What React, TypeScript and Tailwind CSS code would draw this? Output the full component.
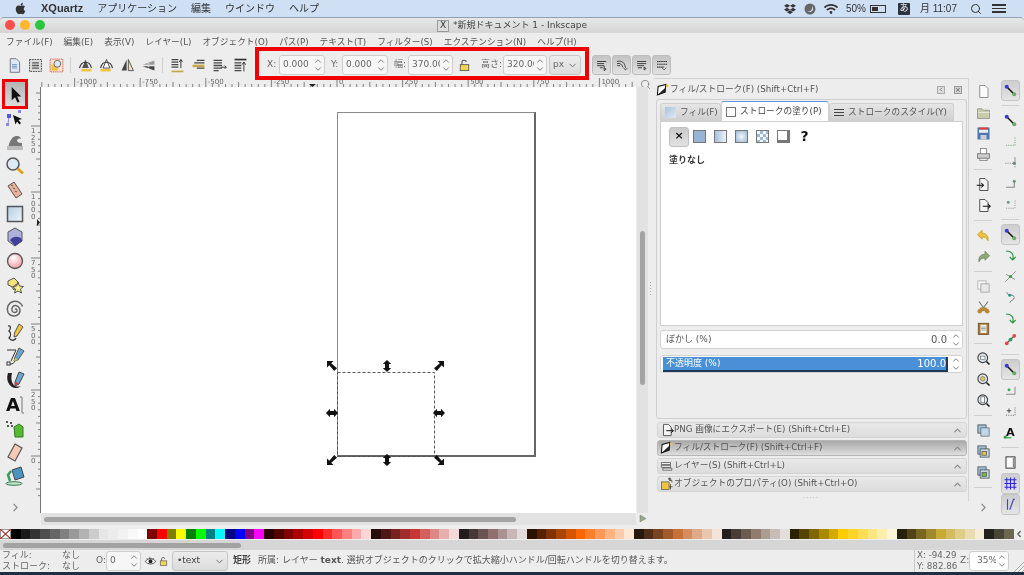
import type { ReactNode } from "react";
import { FaApple, FaDropbox, FaWifi } from "react-icons/fa";
import { ChevronDown, ChevronRight, ChevronUp, ChevronLeft, Search } from "lucide-react";

const Ico = ({ children, s = 20 }: { children: ReactNode; s?: number }) => (
  <svg width={s} height={s} viewBox="0 0 20 20" className="shrink-0">
    {children}
  </svg>
);

const doc = "M5 2h7l4 4v12H5z";

const icons: Record<string, ReactNode> = {
  // left toolbox
  select: <path d="M6 2v14l3.5-3 2.6 5.5 2.2-1-2.6-5.3H16z" fill="#111" />,
  node: (
    <g>
      <path d="M4 8 3 16" stroke="#8888ee" fill="none" />
      <rect x="2" y="6" width="4" height="4" fill="#5555ee" />
      <rect x="1" y="15" width="3" height="3" fill="#8888ee" />
      <rect x="13" y="2" width="3" height="3" fill="#8888ee" />
      <path d="m8 7 9 4-3.5 1 2.5 3-1.500 1.500-2.500-3-1.500 3z" fill="#111" />
    </g>
  ),
  tweak: (
    <g>
      <path d="M3 17c1-6 3-12 8-13 3-.5 5 1 5 3-2-1-4 0-4 2 1 2 4 2 5 2v6z" fill="#777" />
      <path d="M2 14h16v4H2z" fill="#bbb" />
    </g>
  ),
  zoom: (
    <g>
      <circle cx="8" cy="8" r="6" fill="#dceaf6" stroke="#555" strokeWidth="1.500" />
      <path d="m12.500 12.500 5.500 5" stroke="#e0a020" strokeWidth="3" />
    </g>
  ),
  ruler: (
    <g>
      <path d="m3 6 6-4 8 12-6 4z" fill="#eab39a" stroke="#555" />
      <path d="m6 5 2 1M8 8l2 1M10 11l2 1" stroke="#555" />
    </g>
  ),
  rect: (
    <g>
      <defs>
        <linearGradient id="rc" x1="0" y1="0" x2="1" y2="1">
          <stop offset="0" stopColor="#b5cde4" />
          <stop offset="1" stopColor="#f0f4f8" />
        </linearGradient>
      </defs>
      <rect x="2.500" y="2.500" width="15" height="15" fill="url(#rc)" stroke="#555" strokeWidth="1.500" />
    </g>
  ),
  box3d: (
    <g>
      <path d="m10 1 7 4v9l-7 5-7-5V5z" fill="#b0b0dc" stroke="#555" />
      <path d="M5 13c3-4 7-4 11-2l1 3-7 5z" fill="#40409c" />
    </g>
  ),
  circle: (
    <g>
      <defs>
        <radialGradient id="cc" cx="0.4" cy="0.3" r="0.8">
          <stop offset="0" stopColor="#fff" />
          <stop offset="1" stopColor="#f38f9b" />
        </radialGradient>
      </defs>
      <circle cx="10" cy="10" r="7.500" fill="url(#cc)" stroke="#555" strokeWidth="1.300" />
    </g>
  ),
  star: (
    <g>
      <path d="m3 6 6-3 5 5-4 2-1 5-3-4-3-1z" fill="#f4e37a" stroke="#555" />
      <path d="m13 7 1.500 4 4 .5-3 2.500 1 4-3.500-2-3.500 2 1-4-3-2.500 4-.5z" fill="#f8ec88" stroke="#555" />
    </g>
  ),
  spiral: (
    <path
      d="M10 10.500c1-1 2.500 0 2 1.500-.8 2-4 1.800-5-.3-1-3 1.500-5.700 4.500-5 3.500 1 4.500 5.300 2.500 8-3 3.500-9 3-11-1.200C1 9 3.500 3.500 8.500 2.500c4-.7 8 1.500 9 5"
      fill="none"
      stroke="#666"
      strokeWidth="1.500"
    />
  ),
  pencil: (
    <g>
      <path d="M3 3c3-1 3 3 1 5 2 2 2 5 0 7 2 3 6 3 7 0" fill="none" stroke="#333" strokeWidth="1.300" />
      <path d="m14 1 4 3-6 9-3 1 .5-4z" fill="#eec340" stroke="#555" />
    </g>
  ),
  pen: (
    <g>
      <path d="M2 3h9L6 14" fill="none" stroke="#333" />
      <rect x="2" y="15" width="3" height="3" fill="#fff" stroke="#333" />
      <path d="M5 17c3 0 4-1 5-3" stroke="#333" fill="none" />
      <path d="m14 1 5 3-6 9-4 1 1-4z" fill="#6ca6d0" stroke="#555" />
      <path d="m10 11 3 2-4 1z" fill="#eec340" />
    </g>
  ),
  callig: (
    <g>
      <path d="M3 2c-2 6 0 11 4 14 3 2 7 1 9-1-3 1-6 1-8-2C6 10 6 6 7 2z" fill="#222" />
      <path d="m14 1 5 2-5 10-4 2 0-4z" fill="#6ca6d0" stroke="#444" />
      <path d="m10.500 11 3 1-3.500 3z" fill="#d33" />
    </g>
  ),
  text: (
    <g>
      <text x="1" y="16" fontSize="18" fontWeight="900" fontFamily="'DejaVu Sans',sans-serif" fill="#111">
        A
      </text>
      <path d="M15 2h2v16h2" fill="none" stroke="#777" />
    </g>
  ),
  spray: (
    <g>
      <path d="m9 8 5-3 4 3v10H10z" fill="#55bb33" stroke="#2f7a20" />
      <path d="M1 2h2v2H1zM5 3h2v2H5zM2 6h2v2H2zM6 6h2v2H6z" fill="#555" />
    </g>
  ),
  eraser: <path d="m10 2 7 4-7 13-7-4z" fill="#f6c9b8" stroke="#555" strokeWidth="1.200" />,
  bucket: (
    <g>
      <path d="m7 4 9-3 3 10-9 3z" fill="#4c94c0" stroke="#444" />
      <path d="M6 5 3 9l2 6" stroke="#3a9a60" strokeWidth="2.500" fill="none" />
      <ellipse cx="9" cy="17.500" rx="8" ry="1.800" fill="#bfe3c8" stroke="#3a7a50" />
    </g>
  ),
  // top toolbar
  newDoc: (
    <g>
      <path d={doc} fill="#dfe9f5" stroke="#667" />
      <path d="M7 9h6M7 11h6M7 13h6" stroke="#5f86c0" />
    </g>
  ),
  allLayers: (
    <g>
      <rect x="3" y="3" width="14" height="14" fill="#ddd" stroke="#333" strokeDasharray="2 1" />
      <path d="M6 7h8M6 10h8M6 13h8" stroke="#555" strokeWidth="1.500" />
    </g>
  ),
  zoomSel: (
    <g>
      <rect x="2.500" y="2.500" width="15" height="15" fill="#f3ead2" stroke="#d33" strokeDasharray="1.500 1" />
      <rect x="4" y="9" width="8" height="7" fill="#eec340" />
      <circle cx="11" cy="8" r="4" fill="#dceaf6" stroke="#555" />
    </g>
  ),
  rotL: (
    <g>
      <path d="M10 3 6 13h8z" fill="#555" />
      <path d="M3 13c2-9 12-9 14 0" fill="none" stroke="#333" strokeWidth="1.300" />
      <path d="M5 14h12v3H5z" fill="#eec340" />
    </g>
  ),
  rotR: (
    <g>
      <path d="M10 3 6 13h8z" fill="#fff" stroke="#333" />
      <path d="M3 13c2-9 12-9 14 0" fill="none" stroke="#333" strokeWidth="1.300" />
      <path d="M3 14h12v3H3z" fill="#eec340" />
    </g>
  ),
  flipH: (
    <g>
      <path d="M9 3v13H3z" fill="#444" />
      <path d="M11 3v13h6z" fill="#e8e0c0" stroke="#444" />
    </g>
  ),
  flipV: (
    <g>
      <path d="M3 9 17 4v5z" fill="#999" />
      <path d="M3 11l14 5v-5z" fill="#444" />
      <path d="M10 5v10" stroke="#ddd" strokeWidth="2" strokeDasharray="1 1" />
    </g>
  ),
  raiseTop: (
    <g>
      <path d="M3 3h8M3 6h8M3 9h8M3 12h8" stroke="#444" strokeWidth="1.500" />
      <path d="M3 16h14v2H3z" fill="#c8a848" />
      <path d="M14 13V3m-2 3 2-3 2 3" stroke="#222" fill="none" />
    </g>
  ),
  raise: (
    <g>
      <path d="M8 4h9M5 7h12M8 13h9" stroke="#444" strokeWidth="1.500" />
      <path d="M3 9h14v3H3z" fill="#c8a848" />
    </g>
  ),
  lower: (
    <g>
      <path d="M3 4h10M3 7h10M3 10h10" stroke="#444" strokeWidth="1.500" />
      <path d="M3 13h10M3 16h6" stroke="#444" strokeWidth="1.500" />
      <path d="M12 12h6m-2-2 2 2-2 2" stroke="#222" fill="none" />
    </g>
  ),
  lowerBottom: (
    <g>
      <path d="M3 3h14" stroke="#333" strokeWidth="2" />
      <path d="M3 7h8M3 10h8M3 13h8M3 16h8" stroke="#444" strokeWidth="1.500" />
      <path d="M14 17V6m-2 3 2-3 2 3" stroke="#222" fill="none" />
    </g>
  ),
  affect1: <path d="M3 5h13M3 8h10M3 11h10v3M13 14l3 2-3 2zM7 14h4" stroke="#333" strokeWidth="1.300" fill="none" />,
  affect2: <path d="M3 5c7-2 11 2 12 9M3 8c4-1 7 1 8 5M3 11h4m5 3 3 3 3-3" stroke="#333" strokeWidth="1.300" fill="none" />,
  affect3: <path d="M3 5h13M3 8h13M3 11h10M4 14h6m3-1 3 2-3 2z" stroke="#333" strokeWidth="1.300" fill="none" />,
  affect4: (
    <g>
      <path d="M3 5h14M3 9h14M3 13h10" stroke="#222" strokeWidth="1.500" strokeDasharray="2 1" />
      <path d="m10 14 3 3 3-3" stroke="#333" fill="none" />
    </g>
  ),
  lock: (
    <g>
      <path d="M7 9V6c0-3 5-3 5 0" fill="none" stroke="#555" strokeWidth="1.300" />
      <rect x="5" y="9" width="10" height="7" fill="#eed55a" stroke="#555" />
    </g>
  ),
  eye: (
    <g>
      <path d="M2 10c4-6 12-6 16 0-4 5-12 5-16 0z" fill="#fff" stroke="#333" strokeWidth="1.300" />
      <circle cx="10" cy="9.500" r="3" fill="#222" />
      <path d="M4 5l2 2M9 3v3M15 5l-2 2" stroke="#333" />
    </g>
  ),
  // right bar, commands
  rNew: <path d={doc} fill="#fbfbfb" stroke="#888" strokeWidth="1.200" />,
  rOpen: (
    <g>
      <path d="M2 5h6l2 2h8v11H2z" fill="#c8ccaa" stroke="#888" />
      <path d="M3 10h15" stroke="#eef0dd" />
    </g>
  ),
  rSave: (
    <g>
      <rect x="2" y="2" width="16" height="16" fill="#4d77a8" />
      <rect x="4" y="2" width="12" height="3" fill="#e23b3b" />
      <rect x="4" y="5" width="12" height="4" fill="#eee" />
      <rect x="6" y="12" width="8" height="6" fill="#ccd" />
    </g>
  ),
  rPrint: (
    <g>
      <rect x="6" y="2" width="8" height="8" fill="#fff" stroke="#777" />
      <rect x="2" y="9" width="16" height="6" fill="#ccc" stroke="#666" />
      <rect x="5" y="15" width="10" height="3" fill="#eee" stroke="#777" />
    </g>
  ),
  rImport: (
    <g>
      <path d={doc} fill="#f4f4f4" stroke="#444" strokeWidth="1.200" />
      <path d="M1 11h9m-3-3 3 3-3 3" stroke="#111" strokeWidth="1.400" fill="none" />
    </g>
  ),
  rExport: (
    <g>
      <path d={doc} fill="#f4f4f4" stroke="#444" strokeWidth="1.200" />
      <path d="M9 11h10m-3-3 3 3-3 3" stroke="#111" strokeWidth="1.400" fill="none" />
    </g>
  ),
  rUndo: <path d="M8 3 2 9l6 6v-3c4 0 6 1 8 5 1-6-2-10-8-10z" fill="#eec340" stroke="#c09a20" />,
  rRedo: <path d="m12 3 6 6-6 6v-3c-4 0-6 1-8 5-1-6 2-10 8-10z" fill="#8ea878" stroke="#6a8058" />,
  rCopy: (
    <g>
      <rect x="2.500" y="2.500" width="11" height="11" fill="#f4f4f4" stroke="#aaa" />
      <rect x="6.500" y="6.500" width="11" height="11" fill="#e8e8e8" stroke="#999" />
    </g>
  ),
  rCut: (
    <g>
      <path d="m4 2 8 11M16 2 8 13" stroke="#777" strokeWidth="1.500" />
      <circle cx="5" cy="15" r="3" fill="#b88838" />
      <circle cx="15" cy="15" r="3" fill="#b88838" />
      <path d="M5 10h10v5H5z" fill="#b88838" />
    </g>
  ),
  rPaste: (
    <g>
      <rect x="3" y="3" width="14" height="15" fill="#a87838" stroke="#6a4a20" />
      <rect x="6" y="5" width="8" height="11" fill="#f4f4f4" />
      <path d="M7 8h6M7 10h6M7 12h6" stroke="#888" />
    </g>
  ),
  rZ1: (
    <g>
      <circle cx="9" cy="9" r="6.500" fill="#dbe6f0" stroke="#444" strokeWidth="1.500" />
      <rect x="6" y="7" width="6" height="4" fill="#fff" stroke="#777" />
      <path d="m14 14 4 4" stroke="#111" strokeWidth="2" />
    </g>
  ),
  rZ2: (
    <g>
      <circle cx="9" cy="9" r="6.500" fill="#dbe6f0" stroke="#444" strokeWidth="1.500" />
      <circle cx="9" cy="9" r="3" fill="#eec340" stroke="#777" />
      <path d="m14 14 4 4" stroke="#111" strokeWidth="2" />
    </g>
  ),
  rZ3: (
    <g>
      <circle cx="9" cy="9" r="6.500" fill="#dbe6f0" stroke="#444" strokeWidth="1.500" />
      <rect x="6.500" y="5" width="5" height="8" fill="#fff" stroke="#666" />
      <path d="m14 14 4 4" stroke="#111" strokeWidth="2" />
    </g>
  ),
  rDup: (
    <g>
      <rect x="2.500" y="2.500" width="11" height="11" fill="#9cc0dc" stroke="#444" />
      <rect x="6.500" y="6.500" width="11" height="11" fill="#c0d8ea" stroke="#666" />
    </g>
  ),
  rGroup: (
    <g>
      <rect x="2.500" y="2.500" width="11" height="11" fill="#9cc0dc" stroke="#444" />
      <rect x="5.500" y="6.500" width="12" height="11" fill="#c0d8ea" stroke="#444" />
      <rect x="8" y="10" width="6" height="5" fill="#eec340" stroke="#555" />
    </g>
  ),
  rUngroup: (
    <g>
      <rect x="2.500" y="2.500" width="11" height="11" fill="#9cc0dc" stroke="#444" />
      <rect x="5.500" y="6.500" width="12" height="11" fill="#c0d8ea" stroke="#444" />
      <rect x="8" y="10" width="6" height="5" fill="#7cb850" stroke="#555" />
    </g>
  ),
  // right bar, snapping
  snapNode: (
    <g>
      <path d="m5 5 10 10" stroke="#111" strokeWidth="2" />
      <circle cx="5" cy="5" r="2.700" fill="#3a3ad0" />
      <circle cx="15" cy="15" r="2.700" fill="#60b060" />
    </g>
  ),
  snapBBox: <path d="M4 15h12V3" fill="none" stroke="#7aa87a" strokeWidth="1.500" strokeDasharray="1.500 1.500" />,
  snapEdge: (
    <g>
      <path d="M3 11h13V3v14" fill="none" stroke="#888" strokeWidth="1.300" strokeDasharray="1.500 1.500" />
      <circle cx="15" cy="11" r="2" fill="#5a8a70" />
    </g>
  ),
  snapCorner: (
    <g>
      <path d="M4 15h11V6" fill="none" stroke="#888" strokeWidth="1.500" />
      <circle cx="15" cy="7" r="2" fill="#5a9a70" />
    </g>
  ),
  snapMid: (
    <g>
      <path d="M4 15h12V4" fill="none" stroke="#999" strokeWidth="1.300" strokeDasharray="1.500 1.500" />
      <circle cx="7" cy="7" r="2" fill="#7a9a88" />
    </g>
  ),
  snapCurve: <path d="M4 4c7 0 11 4 9 11m-4-3 4 4 4-4" fill="none" stroke="#2a9a40" strokeWidth="1.500" />,
  snapCross: (
    <g>
      <path d="m3 17 14-14M4 7l12 7" stroke="#777" />
      <circle cx="10" cy="10" r="2" fill="#2a9a40" />
    </g>
  ),
  snapSmooth: (
    <g>
      <path d="M5 3c0 5 10 2 10 7 0 4-5 3-6 7" fill="none" stroke="#777" strokeWidth="1.300" />
      <circle cx="9" cy="7" r="2" fill="#2a9a80" />
    </g>
  ),
  snapLine: (
    <g>
      <path d="m4 16 12-12" stroke="#555" strokeWidth="1.500" />
      <circle cx="5" cy="15" r="2.500" fill="#e04848" />
      <circle cx="10" cy="10" r="2.500" fill="#2a9a60" />
      <circle cx="15" cy="5" r="2.500" fill="#e04848" />
    </g>
  ),
  snapObjMid: (
    <g>
      <path d="M4 15h12V5" fill="none" stroke="#888" strokeWidth="1.300" />
      <circle cx="8" cy="9" r="2" fill="#44aa60" />
    </g>
  ),
  snapCenter: (
    <g>
      <path d="M4 15h12V4" fill="none" stroke="#777" strokeWidth="1.300" strokeDasharray="1.500 1.500" />
      <path d="M8 6v6M5 9h6" stroke="#222" />
    </g>
  ),
  snapText: (
    <g>
      <text x="4" y="15" fontSize="15" fontWeight="900" fontFamily="'DejaVu Sans',sans-serif" fill="#111">
        A
      </text>
      <path d="M1 17h10" stroke="#2a9a40" strokeWidth="1.500" />
      <circle cx="3" cy="16" r="2" fill="#2a9a40" />
    </g>
  ),
  snapPage: (
    <g>
      <rect x="4" y="2.500" width="12" height="15" fill="#fff" stroke="#333" strokeWidth="1.300" />
      <path d="M14 4v12" stroke="#888" strokeWidth="2" />
    </g>
  ),
  grid: <path d="M2 5h16M2 10h16M2 15h16M5 2v16M10 2v16M15 2v16" stroke="#2222dd" strokeWidth="1.300" />,
  guides: <path d="M6 3v14M9 17 14 3h2" fill="none" stroke="#4444cc" strokeWidth="1.600" />,
  // panel
  fillStroke: (
    <g>
      <path d="M2 17 3 5l11-3-1 11z" fill="#fff" stroke="#111" strokeWidth="1.500" />
      <path d="M2 17 13 7l1 6z" fill="#222" />
      <circle cx="16" cy="4" r="2" fill="#eec340" />
    </g>
  ),
  layers: (
    <path d="M2 5h13v3H2zM2 9h13v3H2zM4 13h13v3H4z" fill="#eee" stroke="#444" />
  ),
  props: (
    <g>
      <rect x="2" y="7" width="11" height="11" fill="#eec340" stroke="#555" />
      <path d="M12 2h2v3h3v3M15 10v8m-2-4h5" stroke="#333" fill="none" />
      <circle cx="14" cy="3" r="1.500" fill="none" stroke="#333" />
    </g>
  ),
};

const I = ({ n, s }: { n: string; s?: number }) => <Ico s={s}>{icons[n]}</Ico>;

const Spin = () => (
  <div className="flex w-[12px] shrink-0 flex-col items-center justify-center text-[#666]">
    <ChevronUp size={10} strokeWidth={2} className="-mb-[1px]" />
    <ChevronDown size={10} strokeWidth={2} className="-mt-[1px]" />
  </div>
);

const Field = ({ value, className }: { value: string; className: string }) => (
  <div
    className={`flex h-[20px] shrink-0 items-center overflow-hidden rounded-[3px] border border-[#cdcdcd] bg-[#f6f6f6] pl-[3px] text-[9px] text-[#666] ${className}`}
  >
    <span className="flex-1 overflow-hidden whitespace-nowrap">{value}</span>
    <Spin />
  </div>
);

const Sep = () => <div className="h-[16px] w-[1px] shrink-0 bg-[#d0d0d0]" />;

const HRule = () => <div className="mx-auto h-[1px] w-[18px] bg-[#cfcfcf]" />;

const Gutter = ({ items }: { items: string[] }) => (
  <>
    {items.map((n, i) =>
      n === "-" ? (
        <div key={i} className="flex h-[9px] items-center">
          <div className="w-full">
            <HRule />
          </div>
        </div>
      ) : n.startsWith("*") ? (
        <div
          key={i}
          className="mx-[3.5px] flex h-[21px] items-center justify-center rounded-[3px] border border-[#c4c4c4] bg-linear-to-b from-[#cdcdcd] to-[#e4e4e4]"
        >
          <I n={n.slice(1)} s={15} />
        </div>
      ) : (
        <div key={i} className="flex h-[21px] items-center justify-center">
          <I n={n} s={15} />
        </div>
      ),
    )}
  </>
);

const toolbox = [
  "node", "tweak", "zoom", "ruler", "rect", "box3d", "circle", "star", "spiral",
  "pencil", "pen", "callig", "text", "spray", "eraser", "bucket",
];

const menus = [
  "ファイル(F)", "編集(E)", "表示(V)", "レイヤー(L)", "オブジェクト(O)", "パス(P)",
  "テキスト(T)", "フィルター(S)", "エクステンション(N)", "ヘルプ(H)",
];

const palette = [
  "#000000", "#1a1a1a", "#333333", "#4d4d4d", "#666666", "#808080", "#999999", "#b3b3b3", "#cccccc", "#e6e6e6", "#ececec", "#f2f2f2", "#f9f9f9", "#ffffff",
  "#800000", "#ff0000", "#808000", "#ffff00", "#008000", "#00ff00", "#008080", "#00ffff", "#000080", "#0000ff", "#800080", "#ff00ff",
  "#2b0000", "#550000", "#800000", "#aa0000", "#d40000", "#ff0000", "#ff2a2a", "#ff5555", "#ff8080", "#ffaaaa", "#ffd5d5",
  "#280b0b", "#501616", "#782121", "#a02c2c", "#c83737", "#d35f5f", "#de8787", "#e9afaf", "#f4d7d7",
  "#241c1c", "#483737", "#6c5353", "#916f6f", "#ac9393", "#c8b7b7", "#e3dbdb",
  "#2b1100", "#552200", "#803300", "#aa4400", "#d45500", "#ff6600", "#ff7f2a", "#ff9955", "#ffb380", "#ffccaa", "#ffe6d5",
  "#28170b", "#502d16", "#784421", "#a05a2c", "#c87137", "#d38d5f", "#deaa87", "#e9c6af", "#f4e3d7",
  "#241f1c", "#483e37", "#6c5d53", "#917c6f", "#ac9d93", "#c8beb7", "#e3dedb",
  "#2b2200", "#554400", "#806600", "#aa8800", "#d4aa00", "#ffcc00", "#ffd42a", "#ffdd55", "#ffe680", "#ffeeaa", "#fff6d5",
  "#28220b", "#504416", "#786721", "#a0892c", "#c8ab37", "#d3bc5f", "#decd87", "#e9ddaf", "#f4eed7",
  "#24221c", "#484537", "#6c6753",
];

const RulerH = () => {
  const x0 = 296;
  const step = 65.6;
  const ticks = [];
  for (let i = -46; i <= 46; i++) {
    const x = x0 + (i * step) / 10;
    if (x < 0 || x > 595) continue;
    const h = i % 10 === 0 ? 9 : i % 5 === 0 ? 5 : 3;
    ticks.push(<path key={i} d={`M${x} 9V${9 - h}`} stroke="#666" strokeWidth="0.800" />);
  }
  const labels = [-1000, -750, -500, -250, 0, 250, 500, 750, 1000];
  return (
    <svg width="595" height="9">
      {ticks}
      {labels.map((v, i) => (
        <text key={v} x={x0 + (i - 4) * step + 2} y="6" fontSize="7" fill="#666" fontFamily="'DejaVu Sans',sans-serif">
          {v}
        </text>
      ))}
      <path d="M268 6h7l-3.500 3z" fill="#222" />
    </svg>
  );
};

const RulerV = () => {
  const y0 = 369;
  const step = 66;
  const ticks = [];
  for (let i = -6; i <= 60; i++) {
    const y = y0 - (i * step) / 10;
    if (y < 0 || y > 426) continue;
    const w = i % 10 === 0 ? 10 : i % 5 === 0 ? 5 : 3;
    ticks.push(<path key={i} d={`M11 ${y}H${11 - w}`} stroke="#666" strokeWidth="0.800" />);
  }
  return (
    <svg width="11" height="426">
      {ticks}
      <path d="M10.500 0V426" stroke="#777" />
      {[0, 250, 500, 750, 1000, 1250].map((v, i) =>
        String(v)
          .split("")
          .map((d, j) => (
            <text
              key={`${v}-${j}`}
              x="1"
              y={y0 - i * step + 7 + j * 6.500}
              fontSize="7"
              fill="#666"
              fontFamily="'DejaVu Sans',sans-serif"
            >
              {d}
            </text>
          )),
      )}
      <path d="M7 132v7l3-3.500z" fill="#222" />
    </svg>
  );
};

const arrowV = "M0-6 4.200-2H2V2H4.200L0 6-4.200 2H-2V-2H-4.200z";
const arrowC = "M-5-5H1.500L-.8-2.700 5 2.200 2.200 5-2.700-.8-5 1.500z";

const Selection = () => (
  <svg className="absolute left-0 top-0" width="595" height="426">
    <rect x="296.500" y="285.500" width="97" height="84" fill="none" stroke="#555" strokeDasharray="3 2" />
    {[
      [346, 279, 0],
      [346, 373, 0],
      [291, 326, 90],
      [398, 326, 90],
      [291, 279, 0, 1],
      [398, 279, 90, 1],
      [398, 373, 180, 1],
      [291, 373, 270, 1],
    ].map(([x, y, r, c], i) => (
      <path key={i} d={c ? arrowC : arrowV} transform={`translate(${x} ${y}) rotate(${r})`} fill="#111" />
    ))}
  </svg>
);

const Tab = ({ children, active, className }: { children: ReactNode; active?: boolean; className: string }) => (
  <div
    className={`flex shrink-0 items-center gap-[4px] whitespace-nowrap rounded-t-[3px] border border-b-0 px-[4px] ${
      active
        ? "h-[20px] border-[#cfcfcf] border-t-[#5b9be0] bg-white text-[#444]"
        : "mt-[2px] h-[18px] border-[#cfcfcf] bg-linear-to-b from-[#e6e6e6] to-[#cfcfcf] text-[#555]"
    } ${className}`}
  >
    {children}
  </div>
);

const Swatch = ({ className }: { className: string }) => (
  <div className="flex h-[20px] w-[21px] items-center justify-center">
    <div className={`h-[13px] w-[13px] border border-[#777] ${className}`} />
  </div>
);

const Expander = ({ icon, label, active }: { icon: string; label: string; active?: boolean }) => (
  <div
    className={`flex h-[16px] items-center rounded-[3px] border pl-[2px] pr-[3px] text-[8.7px] text-[#555] ${
      active
        ? "border-[#b5b5b5] bg-linear-to-b from-[#a9a9a9] to-[#dedede]"
        : "border-[#d4d4d4] bg-linear-to-b from-[#e9e9e9] to-[#dcdcdc]"
    }`}
  >
    <I n={icon} s={14} />
    <span className="flex-1 whitespace-nowrap">{label}</span>
    <ChevronUp size={11} strokeWidth={2.500} className="text-[#888]" />
  </div>
);

const ToolBtn = ({ n }: { n: string }) => (
  <div className="flex h-[20px] w-[20px] shrink-0 items-center justify-center">
    <I n={n} s={17} />
  </div>
);

export default function App() {
  return (
    <div className="relative h-[575px] w-[1024px] overflow-hidden bg-[#ededed] font-['DejaVu_Sans','Noto_Sans_CJK_JP',sans-serif] blur-[0.4px]">
      {/* mac menu bar */}
      <div className="flex h-[17px] items-center bg-[#cfe0f5] font-['Liberation_Sans','Noto_Sans_CJK_JP',sans-serif] text-[10px] text-[#333]">
        <FaApple size={13} className="ml-[14px] text-[#333]" />
        <span className="ml-[14px] text-[11px] font-bold">XQuartz</span>
        <span className="ml-[14px]">アプリケーション</span>
        <span className="ml-[14px]">編集</span>
        <span className="ml-[14px]">ウインドウ</span>
        <span className="ml-[14px]">ヘルプ</span>
        <div className="ml-auto flex items-center pr-[18px]">
          <FaDropbox size={12} />
          <svg width="12" height="12" viewBox="0 0 12 12" className="ml-[8px]">
            <circle cx="6" cy="6" r="5.500" fill="#666" />
            <path d="M3 8c3 1 6-1 5-5 3 3 0 8-5 5z" fill="#cfe0f5" />
          </svg>
          <FaWifi size={14} className="ml-[8px]" />
          <span className="ml-[8px]">50%</span>
          <div className="ml-[4px] flex h-[8px] w-[16px] items-center border border-[#333] p-[1px]">
            <div className="h-full w-1/2 bg-[#333]" />
          </div>
          <div className="ml-[12px] flex h-[12px] w-[12px] items-center justify-center rounded-[1px] bg-[#2c3440] text-[9px] text-white">
            あ
          </div>
          <span className="ml-[10px]">月 11:07</span>
          <Search size={12} strokeWidth={2} className="ml-[13px]" />
          <div className="ml-[10px] flex w-[14px] flex-col gap-[2px]">
            <div className="h-[1.5px] bg-[#333]" />
            <div className="h-[1.5px] bg-[#333]" />
            <div className="h-[1.5px] bg-[#333]" />
          </div>
        </div>
      </div>

      {/* title bar */}
      <div className="relative flex h-[16px] items-center justify-center rounded-t-[4px] border-t border-[#8ea0b8] bg-linear-to-b from-[#e8e8e8] to-[#d4d4d4] text-[9px] text-[#444]">
        <div className="absolute left-[5px] top-[2px] flex gap-[5px]">
          <div className="h-[10px] w-[10px] rounded-full bg-[#fc4f4a]" />
          <div className="h-[10px] w-[10px] rounded-full bg-[#fdb72a]" />
          <div className="h-[10px] w-[10px] rounded-full bg-[#2bc63c]" />
        </div>
        <div className="mr-[4px] flex h-[12px] w-[12px] items-center justify-center border border-[#999] bg-[#ddd] text-[9px] leading-none text-[#333]">
          X
        </div>
        <span>*新規ドキュメント 1 - Inkscape</span>
      </div>

      {/* menus */}
      <div className="flex h-[19px] items-center gap-[11px] pl-[6px] text-[8.7px] text-[#555]">
        {menus.map((m) => (
          <span key={m} className="whitespace-nowrap">
            {m}
          </span>
        ))}
      </div>

      {/* command bar */}
      <div className="flex h-[26px] items-center pl-[4px] text-[9px] text-[#666]">
        <div className="flex gap-[1px]">
          <ToolBtn n="newDoc" />
          <ToolBtn n="allLayers" />
          <ToolBtn n="zoomSel" />
        </div>
        <div className="ml-[4px]">
          <Sep />
        </div>
        <div className="ml-[4px] flex gap-[1px]">
          <ToolBtn n="rotL" />
          <ToolBtn n="rotR" />
          <ToolBtn n="flipH" />
          <ToolBtn n="flipV" />
        </div>
        <div className="ml-[4px]">
          <Sep />
        </div>
        <div className="ml-[4px] flex gap-[1px]">
          <ToolBtn n="raiseTop" />
          <ToolBtn n="raise" />
          <ToolBtn n="lower" />
          <ToolBtn n="lowerBottom" />
        </div>
        <span className="ml-[17px] w-[12px]">X:</span>
        <Field value="0.000" className="w-[46px]" />
        <span className="ml-[6px] w-[11px]">Y:</span>
        <Field value="0.000" className="w-[46px]" />
        <span className="ml-[6px] w-[14px]">幅:</span>
        <Field value="370.000" className="w-[45px]" />
        <div className="ml-[1px]">
          <ToolBtn n="lock" />
        </div>
        <span className="ml-[7px] w-[22px] whitespace-nowrap">高さ:</span>
        <Field value="320.000" className="w-[44px]" />
        <div className="ml-[2px] flex h-[20px] w-[32px] items-center justify-between rounded-[3px] border border-[#c6c6c6] bg-linear-to-b from-[#ececec] to-[#dcdcdc] pl-[3px] pr-[2px]">
          <span>px</span>
          <ChevronDown size={11} strokeWidth={2} className="text-[#666]" />
        </div>
        <div className="ml-[11px] flex gap-[1px]">
          {["affect1", "affect2", "affect3", "affect4"].map((a) => (
            <div
              key={a}
              className="flex h-[20px] w-[19px] items-center justify-center rounded-[3px] border border-[#bdbdbd] bg-linear-to-b from-[#c4c4c4] to-[#e2e2e2]"
            >
              <I n={a} s={14} />
            </div>
          ))}
        </div>
      </div>

      {/* workspace */}
      <div className="flex h-[450px]">
        {/* tool box */}
        <div className="flex w-[30px] shrink-0 flex-col items-center pt-[4px]">
          <div className="flex h-[24px] w-[24px] items-center justify-center bg-linear-to-b from-[#b4b4b4] to-[#dcdcdc]">
            <I n="select" s={19} />
          </div>
          {toolbox.map((t) => (
            <div key={t} className="flex h-[23.9px] items-center justify-center">
              <I n={t} />
            </div>
          ))}
          <ChevronRight size={13} strokeWidth={2} className="mt-[13px] text-[#888]" />
        </div>

        {/* canvas column */}
        <div className="flex w-[624px] shrink-0 flex-col">
          <div className="flex h-[9px]">
            <div className="w-[11px]" />
            <RulerH />
            <div className="flex flex-1 items-center justify-center pt-[3px]">
              <Search size={11} className="text-[#888]" />
            </div>
          </div>
          <div className="flex h-[426px]">
            <RulerV />
            <div className="relative h-[426px] w-[595px] bg-white">
              <div className="absolute left-[296px] top-[25px] h-[345px] w-[199px] border border-[#8a8a8a] border-r-[2px] border-b-[2px] border-r-[#666] border-b-[#666] bg-white" />
              <Selection />
            </div>
            <div className="flex flex-1 pl-[1px]">
              <div className="flex h-full w-[11px] justify-center bg-[#e2e2e2] pt-[144px]">
                <div className="h-[154px] w-[5px] rounded-full bg-[#a4a4a4]" />
              </div>
              <div className="ml-[2px] mt-[195px] flex flex-col gap-[2px]">
                <div className="h-[1px] w-[1px] bg-[#aaa]" />
                <div className="h-[1px] w-[1px] bg-[#aaa]" />
                <div className="h-[1px] w-[1px] bg-[#aaa]" />
                <div className="h-[1px] w-[1px] bg-[#aaa]" />
                <div className="h-[1px] w-[1px] bg-[#aaa]" />
              </div>
            </div>
          </div>
          <div className="flex h-[15px] items-start">
            <div className="ml-[11px] flex h-[12px] w-[595px] items-center bg-[#e2e2e2] pl-[3px]">
              <div className="h-[5px] w-[472px] rounded-full bg-[#a4a4a4]" />
            </div>
            <svg width="12" height="12" className="ml-[1px]">
              <path d="M3 2v7l6-3.500z" fill="#9aaa88" stroke="#777" strokeWidth="0.500" />
            </svg>
          </div>
        </div>

        {/* dock */}
        <div className="flex w-[315px] shrink-0 flex-col self-start border-r border-t border-[#d2d2d2] pt-[1px]">
          <div className="flex h-[19px] items-center pl-[2px] pr-[6px] text-[8.7px] text-[#555]">
            <I n="fillStroke" s={14} />
            <span className="flex-1 whitespace-nowrap">フィル/ストローク(F) (Shift+Ctrl+F)</span>
            <div className="flex h-[8px] w-[8px] items-center justify-center border border-[#aaa] bg-[#ddd]">
              <ChevronLeft size={7} strokeWidth={3} className="text-[#666]" />
            </div>
            <div className="ml-[9px] h-[8px] w-[8px] border border-[#999] bg-[#d4d4d4] text-center text-[7px] leading-[6px] text-[#555]">
              ×
            </div>
          </div>
          <div className="ml-[2px] h-[320px] w-[311px] rounded-[3px] border border-[#cfcfcf] px-[3px] pt-[1px]">
            <div className="flex h-[20px] text-[8.7px]">
              <Tab className="w-[61px]">
                <div className="h-[11px] w-[11px] shrink-0 bg-linear-to-br from-[#a7c1dc] to-[#e4ecf4]" />
                フィル(F)
              </Tab>
              <Tab active className="w-[108px]">
                <div className="h-[10px] w-[10px] shrink-0 border border-[#777] bg-white" />
                ストロークの塗り(P)
              </Tab>
              <Tab className="w-[125px]">
                <div className="flex w-[10px] shrink-0 flex-col gap-[2px]">
                  <div className="h-[1px] bg-[#444]" />
                  <div className="h-[1px] bg-[#444]" />
                  <div className="h-[1px] bg-[#444]" />
                </div>
                ストロークのスタイル(Y)
              </Tab>
            </div>
            <div className="h-[205px] border border-[#cfcfcf] bg-white px-[8px] pt-[4px]">
              <div className="flex items-center">
                <div className="flex h-[20px] w-[20px] items-center justify-center rounded-[3px] border border-[#c0c0c0] bg-linear-to-b from-[#cacaca] to-[#e2e2e2] text-[11px] font-bold text-[#111]">
                  ×
                </div>
                <Swatch className="bg-[#94b5d6]" />
                <Swatch className="bg-linear-to-r from-[#a7c1dc] to-[#eef3f8]" />
                <Swatch className="bg-[radial-gradient(circle,#f4f7fb,#9cb9d8)]" />
                <Swatch className="bg-[repeating-conic-gradient(#9cb9d8_0_25%,#f4f7fb_0_50%)] bg-size-[6px_6px]" />
                <Swatch className="border-b-[3px] border-r-[3px] bg-white" />
                <span className="w-[21px] text-center text-[14px] font-black text-[#111]">?</span>
              </div>
              <div className="mt-[7px] text-[9px] font-bold text-[#333]">塗りなし</div>
            </div>
            <div className="mt-[4px] flex h-[19px] items-center rounded-[3px] border border-[#d2d2d2] bg-white pl-[5px] text-[9px] text-[#555]">
              <span className="flex-1 pt-[1px]">ぼかし (%)</span>
              <span className="mr-[3px] text-[10px]">0.0</span>
              <Spin />
            </div>
            <div className="mt-[6px] flex h-[18px] items-center rounded-[3px] border border-[#d2d2d2] bg-white pl-[2px] text-[9px]">
              <div className="flex h-[15px] flex-1 items-center justify-between border-b-2 border-r-2 border-[#1d3a5c] bg-[#4a90d9] pl-[3px] text-white">
                <span className="pt-[2px]">不透明度 (%)</span>
                <span className="text-[10px]">100.0</span>
              </div>
              <div className="ml-[2px]">
                <Spin />
              </div>
            </div>
          </div>
          <div className="ml-[3px] mt-[3px] flex w-[310px] flex-col gap-[2px]">
            <Expander icon="rExport" label="PNG 画像にエクスポート(E) (Shift+Ctrl+E)" />
            <Expander icon="fillStroke" label="フィル/ストローク(F) (Shift+Ctrl+F)" active />
            <Expander icon="layers" label="レイヤー(S) (Shift+Ctrl+L)" />
            <Expander icon="props" label="オブジェクトのプロパティ(O) (Shift+Ctrl+O)" />
          </div>
          <div className="mt-[4px] text-center text-[7px] leading-[5px] tracking-[1px] text-[#aaa]">·····</div>
        </div>

        {/* command and snap bars */}
        <div className="flex flex-1">
          <div className="w-[28px] shrink-0 px-[1px] pt-[3px]">
            <Gutter
              items={[
                "rNew", "rOpen", "rSave", "rPrint", "-", "rImport", "rExport", "-", "rUndo", "rRedo", "-",
                "rCopy", "rCut", "rPaste", "-", "rZ1", "rZ2", "rZ3", "-", "rDup", "rGroup", "rUngroup", "-",
              ]}
            />
            <div className="mt-[9px] flex justify-center">
              <ChevronRight size={13} strokeWidth={2} className="text-[#888]" />
            </div>
          </div>
          <div className="w-[27px] shrink-0 pr-[1px] pt-[2px]">
            <Gutter
              items={[
                "*snapNode", "-", "snapNode", "snapBBox", "snapEdge", "snapCorner", "snapMid", "-",
                "*snapNode", "snapCurve", "snapCross", "snapSmooth", "snapCurve", "snapLine", "-",
                "*snapNode", "snapObjMid", "snapCenter", "snapText", "-", "snapPage", "*grid", "*guides",
              ]}
            />
          </div>
        </div>
      </div>

      {/* palette */}
      <div className="flex h-[12px] items-stretch py-[1px]">
        <svg width="11" height="10" className="shrink-0">
          <rect x="0.500" y="0.500" width="10" height="9" fill="#fff" stroke="#999" />
          <path d="m0 0 11 10M11 0 0 10" stroke="#a33" strokeWidth="1.200" />
        </svg>
        <div className="flex w-[1003px] shrink-0">
          {palette.map((c, i) => (
            <div key={i} className="flex-1" style={{ backgroundColor: c }} />
          ))}
        </div>
        <div className="flex flex-1 items-center justify-center">
          <ChevronLeft size={10} strokeWidth={3} className="text-[#555]" />
        </div>
      </div>
      <div className="flex h-[10px] items-center bg-[#d6d6d6] pl-[3px] pr-[9px]">
        <div className="h-[5px] w-[238px] rounded-full bg-[#a2a2a2]" />
      </div>

      {/* status bar */}
      <div className="flex h-[22px] items-center text-[9px] text-[#666]">
        <div className="ml-[2px] w-[60px] leading-[11px]">
          <div>フィル:</div>
          <div className="whitespace-nowrap">ストローク:</div>
        </div>
        <div className="w-[34px] leading-[11px]">
          <div>なし</div>
          <div>なし</div>
        </div>
        <span className="w-[10px]">O:</span>
        <Field value="0" className="w-[35px]" />
        <div className="ml-[3px] flex">
          <I n="eye" s={13} />
          <I n="lock" s={13} />
        </div>
        <div className="ml-[2px] flex h-[20px] w-[56px] items-center justify-between rounded-[3px] border border-[#c6c6c6] bg-linear-to-b from-[#ececec] to-[#dcdcdc] pl-[4px] pr-[2px] text-[#444]">
          <span>•text</span>
          <ChevronDown size={11} strokeWidth={2} className="text-[#666]" />
        </div>
        <span className="ml-[5px] font-bold text-[#444]">矩形</span>
        <span className="ml-[7px] whitespace-nowrap text-[#555]">
          所属: レイヤー <b>text</b>. 選択オブジェクトのクリックで拡大縮小ハンドル/回転ハンドルを切り替えます。
        </span>
        <div className="ml-auto flex h-full items-center border-l border-[#c8c8c8] pl-[2px]">
          <div className="w-[42px] whitespace-nowrap text-[8.7px] leading-[11px]">
            <div>X: -94.29</div>
            <div>Y: 882.86</div>
          </div>
          <span className="ml-[1px] w-[9px]">Z:</span>
          <Field value="35%" className="w-[40px] bg-white! pl-[7px]!" />
          <svg width="15" height="22">
            <path d="M5 22 15 12M9 22l6-6M13 22l2-2" stroke="#aaa" />
          </svg>
        </div>
      </div>
      <div className="h-[3px] bg-[#1f2f40]" />

      {/* red annotation boxes */}
      <div className="absolute left-[2px] top-[79px] h-[30px] w-[26px] border-[3px] border-[#f00000]" />
      <div className="absolute left-[255px] top-[47px] h-[33px] w-[334px] border-[4px] border-[#f00000]" />
    </div>
  );
}
